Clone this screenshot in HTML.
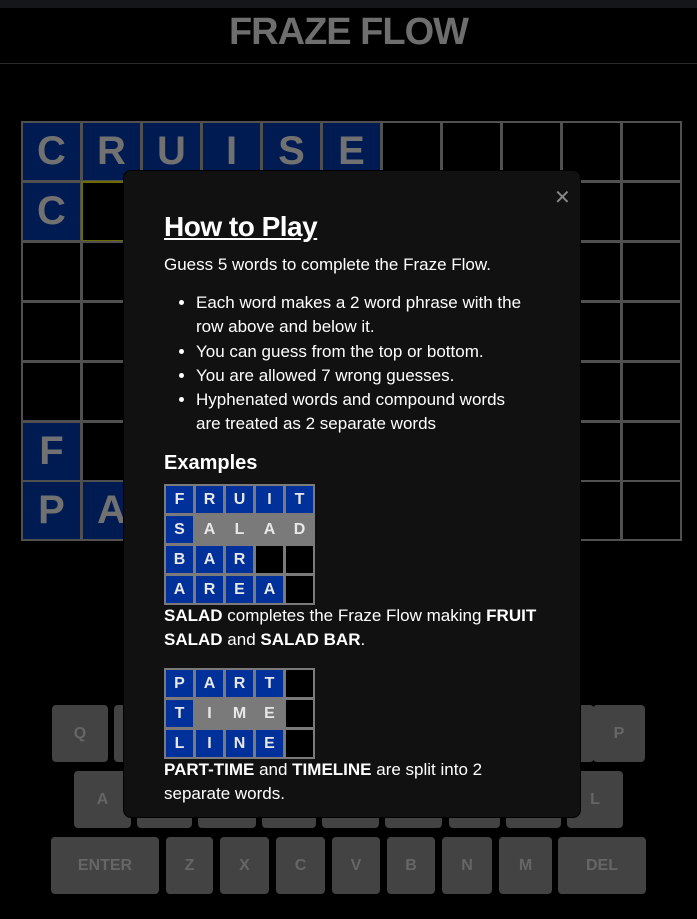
<!DOCTYPE html>
<html><head><meta charset="utf-8"><style>
*{margin:0;padding:0;box-sizing:border-box}
body{width:697px;height:919px;background:#000;position:relative;overflow:hidden;font-family:"Liberation Sans",sans-serif}
.top{position:absolute;left:0;top:0;width:697px;height:8px;background:#151619}
.title{position:absolute;left:0;top:8px;width:697px;height:56px;border-bottom:1px solid #2a2a2a;text-align:center;color:#6e6e6e;font-weight:bold;font-size:38px;line-height:48px;letter-spacing:-1px}
.c{position:absolute;width:61px;height:61px;border:2px solid #505050;color:#717171;font-size:40px;font-weight:bold;text-align:center;line-height:56px}
.b{background:#001a52}
.k{position:absolute;height:57px;background:#434343;border-radius:4px;color:#666;font-weight:bold;font-size:16px;text-align:center;line-height:57px}
.modal{position:absolute;left:123px;top:170px;width:458px;height:648px;background:#111;border-radius:8px;border:1px solid #000;color:#fff}
.x{position:absolute;left:430px;top:14px;color:#888;font-size:20px;font-weight:100}
h1{position:absolute;left:40px;top:40px;font-size:28px;text-decoration:underline;font-weight:bold;letter-spacing:-0.5px}
.p{position:absolute;left:40px;font-size:17px;line-height:24px;width:385px}
ul{position:absolute;left:72px;top:120px;font-size:17px;line-height:24.3px;width:338px}
ul li{margin:0}
h2{position:absolute;left:40px;top:281px;font-size:20px}
.eg{position:absolute;left:40px}
.e{position:absolute;width:31px;height:31px;border:2px solid #7a7a7a;font-weight:bold;font-size:16px;text-align:center;line-height:27px;color:#e8e8e8}
.eb{background:#00309a}.eg2{background:#7a7a7a}.ek{background:#000}
</style></head><body>
<div class="top"></div>
<div class="title">FRAZE FLOW</div>
<div id="grid"></div>
<div id="kb"></div>
<div class="modal">
<div class="x">✕</div>
<h1>How to Play</h1>
<div class="p" style="top:82px">Guess 5 words to complete the Fraze Flow.</div>
<ul>
<li>Each word makes a 2 word phrase with the row above and below it.</li>
<li>You can guess from the top or bottom.</li>
<li>You are allowed 7 wrong guesses.</li>
<li>Hyphenated words and compound words are treated as 2 separate words</li>
</ul>
<h2>Examples</h2>
<div class="eg" id="e1" style="top:313px"></div>
<div class="p" style="top:433px"><b>SALAD</b> completes the Fraze Flow making <b>FRUIT SALAD</b> and <b>SALAD BAR</b>.</div>
<div class="eg" id="e2" style="top:497px"></div>
<div class="p" style="top:587px;width:360px"><b>PART-TIME</b> and <b>TIMELINE</b> are split into 2 separate words.</div>
</div>
<script>
var g=document.getElementById('grid'),h='';
var L={"0":"CRUISE","1":"C","5":"F","6":"PA"};
for(var r=0;r<7;r++)for(var c=0;c<11;c++){var s=L[r]||"",ch=s[c]||"";
var y=[121,181,241,301,361,421,480][r];
var st='left:'+(21+c*60)+'px;top:'+y+'px;';
if(r==1&&c==1)st+='border-color:#6b6b00;';
h+='<div class="c'+(ch?' b':'')+'" style="'+st+'">'+ch+'</div>';}
g.innerHTML=h;
var kb=[[705,[[52,56,'Q'],[114,54,''],[176,54,''],[238,54,''],[300,54,''],[362,54,''],[424,54,''],[486,54,''],[538,56,''],[593,52,'P']]],
[771,[[74,57,'A'],[137,55,''],[198,58,''],[262,54,''],[322,57,''],[385,57,''],[449,51,''],[506,55,''],[567,56,'L']]],
[837,[[51,108,'ENTER'],[166,47,'Z'],[220,49,'X'],[276,49,'C'],[332,48,'V'],[387,48,'B'],[442,50,'N'],[499,53,'M'],[558,88,'DEL']]]];
h='';kb.forEach(function(r){r[1].forEach(function(k){h+='<div class="k" style="top:'+r[0]+'px;left:'+k[0]+'px;width:'+k[1]+'px">'+k[2]+'</div>'})});
document.getElementById('kb').innerHTML=h;
function eg(id,data){var o='';data.forEach(function(row,r){row.forEach(function(cell,c){o+='<div class="e '+cell[1]+'" style="left:'+(c*30)+'px;top:'+(r*30)+'px">'+cell[0]+'</div>'})});document.getElementById(id).innerHTML=o;}
function R(s,t){return s.split('').map(function(ch,i){return [ch===' '?'':ch,t[i]]})}
eg('e1',[R('FRUIT',['eb','eb','eb','eb','eb']),R('SALAD',['eb','eg2','eg2','eg2','eg2']),R('BAR  ',['eb','eb','eb','ek','ek']),R('AREA ',['eb','eb','eb','eb','ek'])]);
eg('e2',[R('PART ',['eb','eb','eb','eb','ek']),R('TIME ',['eb','eg2','eg2','eg2','ek']),R('LINE ',['eb','eb','eb','eb','ek'])]);
</script>
</body></html>
